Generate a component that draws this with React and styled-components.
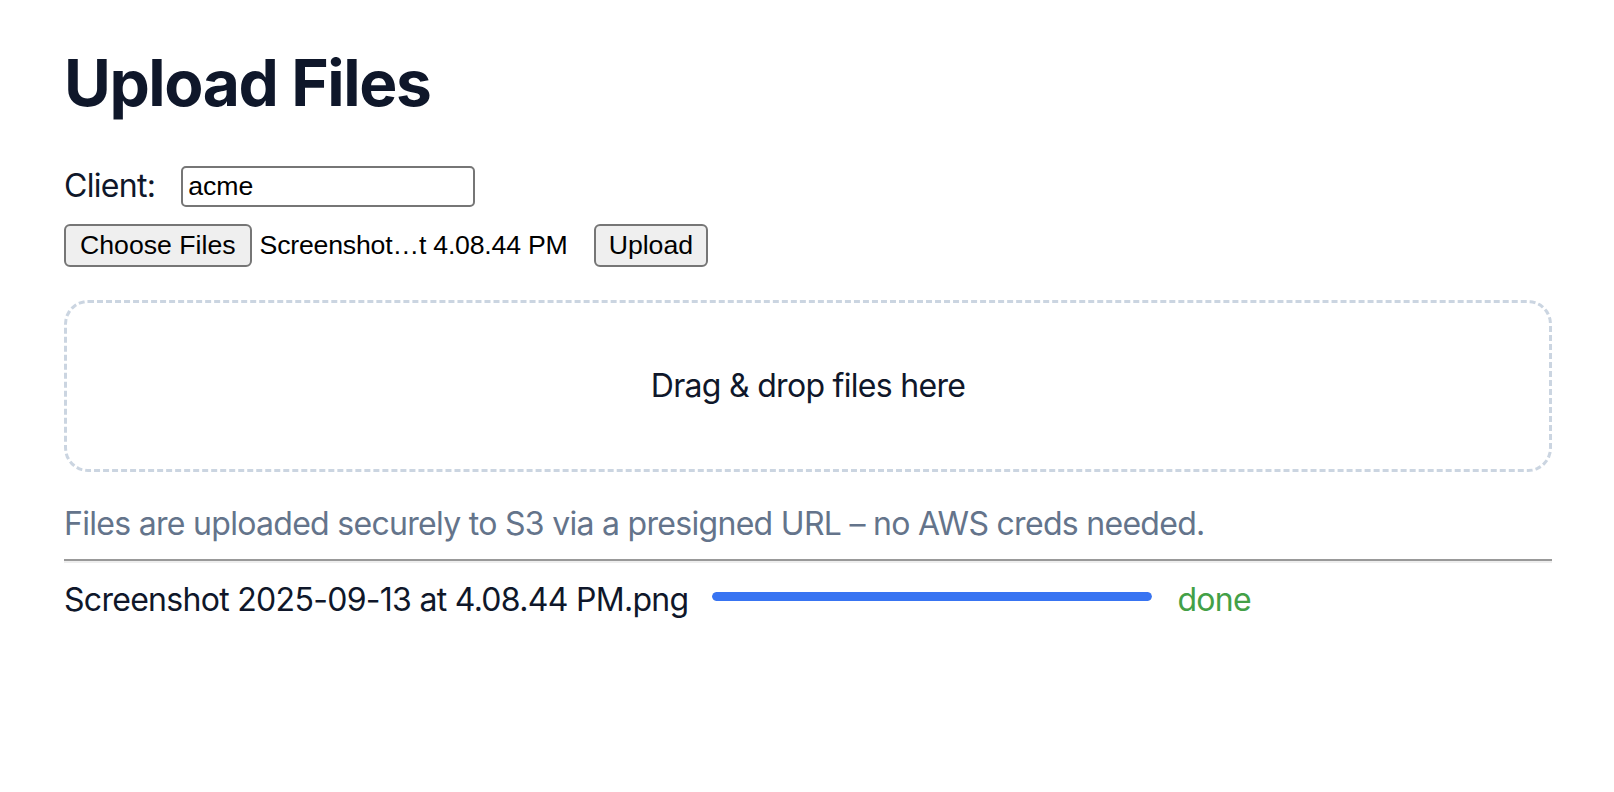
import React from "react";
import styled, { createGlobalStyle } from "styled-components";

const GlobalStyle = createGlobalStyle`
  html, body {
    margin: 0;
    padding: 0;
    background: #ffffff;
  }
  body {
    font-family: Inter, "Noto Sans", system-ui, sans-serif;
    color: #0f172a;
    font-size: 32px;
    letter-spacing: -0.022em;
  }
`;

const Page = styled.main`
  padding: 45px 62px 40px 64px;
  display: flex;
  flex-direction: column;
`;

const Title = styled.h1`
  margin: 0 0 44px;
  font-size: 64px;
  line-height: 1.2;
  font-weight: 700;
  color: #0f172a;
  letter-spacing: -0.022em;
`;

const FieldRow = styled.div`
  display: flex;
  align-items: center;
  gap: ${(p) => p.$gap || 0}px;
  margin-bottom: ${(p) => p.$mb || 0}px;
  height: ${(p) => p.$h}px;
`;

const Label = styled.label`
  font-size: 32px;
  line-height: 1.21;
  color: #0f172a;
`;

const TextInput = styled.input`
  box-sizing: border-box;
  width: 294px;
  height: 41px;
  padding: 2px 5px;
  border: 2px solid #767676;
  border-radius: 5px;
  font-family: "Liberation Sans", Arial, sans-serif;
  font-size: 26.67px;
  letter-spacing: 0;
  color: #000;
  outline: none;
`;

const NativeButton = styled.button`
  box-sizing: border-box;
  height: 43px;
  padding: 0 ${(p) => p.$px || 13}px;
  background: #efefef;
  border: 2px solid #767676;
  border-radius: 6px;
  font-family: "Liberation Sans", Arial, sans-serif;
  font-size: 26.67px;
  letter-spacing: 0;
  color: #000;
  cursor: pointer;
`;

const FileName = styled.span`
  font-family: "Liberation Sans", Arial, sans-serif;
  font-size: 26.67px;
  letter-spacing: -0.2px;
  color: #000;
  margin-left: 8px;
  margin-right: 26px;
`;

const DropZone = styled.div`
  box-sizing: border-box;
  height: 172px;
  border: 3px dashed #cbd5e1;
  border-radius: 24px;
  display: flex;
  align-items: center;
  justify-content: center;
  font-size: 32px;
  color: #0f172a;
  margin-bottom: 33px;
`;

const Hint = styled.p`
  margin: 0 0 15px;
  font-size: 32px;
  line-height: 1.21;
  color: #64748b;
`;

const Rule = styled.hr`
  margin: 0 0 18px;
  border: none;
  border-top: 2px solid #999999;
  border-bottom: 2px solid #eeeeee;
  height: 0;
`;

const UploadRow = styled.div`
  display: flex;
  align-items: center;
`;

const UploadName = styled.span`
  font-size: 32px;
  line-height: 1.21;
  color: #0f172a;
`;

const Track = styled.div`
  width: 440px;
  height: 9px;
  margin: 0 25px 0 24px;
  border-radius: 5px;
  background: #e5e7eb;
  overflow: hidden;
  position: relative;
  top: -3px;
`;

const Fill = styled.div`
  height: 100%;
  background: #3874f2;
  border-radius: 5px;
`;

const Status = styled.span`
  font-size: 32px;
  line-height: 1.21;
  color: #43a047;
`;

export default function App() {
  const progress = 100;
  return (
    <>
      <GlobalStyle />
      <Page>
        <Title>Upload Files</Title>
        <FieldRow $gap={26} $mb={17} $h={41}>
          <Label htmlFor="client">Client:</Label>
          <TextInput id="client" defaultValue="acme" />
        </FieldRow>
        <FieldRow $mb={33} $h={43}>
          <NativeButton $px={14}>Choose Files</NativeButton>
          <FileName>Screenshot…t 4.08.44 PM</FileName>
          <NativeButton $px={13}>Upload</NativeButton>
        </FieldRow>
        <DropZone>Drag &amp; drop files here</DropZone>
        <Hint>Files are uploaded securely to S3 via a presigned URL – no AWS creds needed.</Hint>
        <Rule />
        <UploadRow>
          <UploadName>Screenshot 2025-09-13 at 4.08.44 PM.png</UploadName>
          <Track>
            <Fill style={{ width: `${progress}%` }} />
          </Track>
          <Status>done</Status>
        </UploadRow>
      </Page>
    </>
  );
}
